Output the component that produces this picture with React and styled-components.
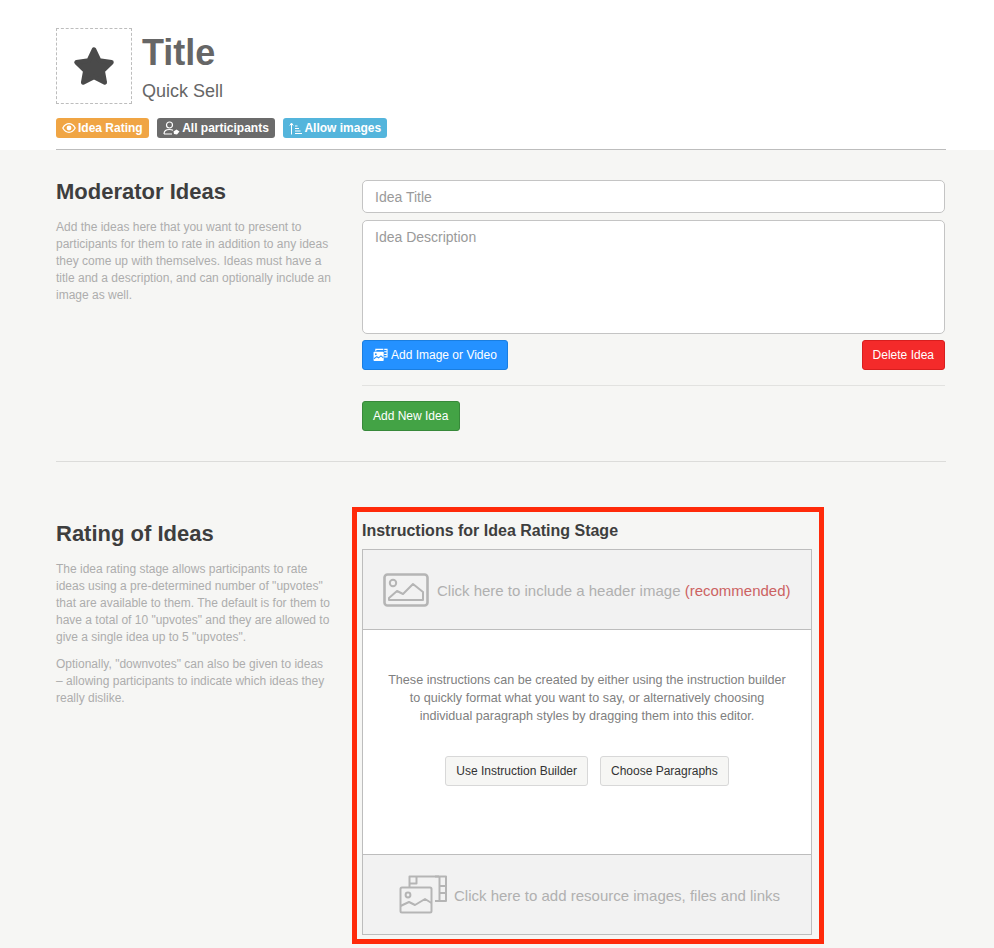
import React from "react"
import styled, { createGlobalStyle } from "styled-components"

const GlobalStyle = createGlobalStyle`
  html, body {
    margin: 0;
    padding: 0;
    background: #f6f6f4;
    font-family: "Liberation Sans", Arial, sans-serif;
  }
  * {
    box-sizing: border-box;
  }
`

const StarIcon = () => (
  <svg width="42" height="40" viewBox="0 0 42 40">
    <path
      d="M21 3.5 L26.3 14.6 L38.5 16.3 L29.7 25 L31.8 36.5 L21 31 L10.2 36.5 L12.3 25 L3.5 16.3 L15.7 14.6 Z"
      fill="#4a4a4a"
      stroke="#4a4a4a"
      strokeWidth="4.5"
      strokeLinejoin="round"
    />
  </svg>
)

const EyeIcon = () => (
  <svg width="14" height="12" viewBox="0 0 14 12" fill="none" stroke="#fff" strokeWidth="1.3">
    <path d="M0.8 6 C2.5 3 4.5 1.7 7 1.7 C9.5 1.7 11.5 3 13.2 6 C11.5 9 9.5 10.3 7 10.3 C4.5 10.3 2.5 9 0.8 6 Z" />
    <circle cx="7" cy="6" r="2.4" fill="#fff" stroke="none" />
  </svg>
)

const ParticipantIcon = () => (
  <svg width="17" height="14" viewBox="0 0 17 14" fill="none" stroke="#fff" strokeWidth="1.2">
    <circle cx="6.5" cy="4" r="3" />
    <path d="M1 13 C1 9.5 3 8.5 6.5 8.5 C8 8.5 9 8.7 10 9.2 M1 13 H9" />
    <path d="M10.5 10.5 L13.5 8.5 L16.5 10.5 L14 13.5 L11 13 Z" fill="#fff" stroke="none" />
  </svg>
)

const SortIcon = () => (
  <svg width="13" height="13" viewBox="0 0 13 13" fill="none" stroke="#fff" strokeWidth="1">
    <path d="M2.5 12.5 V1.5 M0.8 3.5 L2.5 1 L4.2 3.5" />
    <path d="M6 4 H8.5 M6 6.5 H10 M6 9 H11.5 M6 11.5 H13" />
  </svg>
)

const MediaIcon = () => (
  <svg width="15" height="14" viewBox="0 0 16 14" fill="none" stroke="#fff" strokeWidth="1.1">
    <path d="M3 3 V1 H11" />
    <path d="M12 1 H15 V9 H12 M12 3.5 H15 M12 6.5 H15" />
    <rect x="0.6" y="3.6" width="10.8" height="9.8" fill="#fff" stroke="none" rx="0.8" />
    <circle cx="3" cy="6.2" r="1" fill="#2491ff" stroke="none" />
    <path d="M1 11 L4 8.8 L6 10 L8.5 8 L11 10" stroke="#2491ff" />
  </svg>
)

const ImageIcon = () => (
  <svg width="46" height="34" viewBox="0 0 46 34" fill="none" stroke="#b5b5b5">
    <rect x="1.5" y="1.5" width="43" height="31" rx="3" strokeWidth="2.6" />
    <circle cx="10" cy="10" r="3.2" strokeWidth="2" />
    <path d="M6 25 L14 18 L20 21 L30 11 L40 19 V27 H6 Z" strokeWidth="2" strokeLinejoin="round" />
  </svg>
)

const ResourceIcon = () => (
  <svg width="49" height="39" viewBox="0 0 49 39" fill="none" stroke="#b5b5b5" strokeWidth="2" strokeLinejoin="round">
    <path d="M10.5 12 V1.5 H17.5 V8.5 H10.5 M17.5 1.5 H40" />
    <path d="M36 1.5 H47 V26 H36 M40.5 1.5 V26 M40.5 11 H47 M40.5 18 H47" />
    <rect x="1.5" y="12.5" width="31" height="25" rx="1.5" />
    <circle cx="9" cy="20" r="2.4" />
    <path d="M1.5 31 L10 27 L16 30 L26 24 L32.5 28" />
  </svg>
)

export default function App() {
  return (
    <Page>
      <GlobalStyle />
      <Header>
        <TitleRow>
          <IconBox>
            <StarIcon />
          </IconBox>
          <TitleText>
            <Title>Title</Title>
            <Subtitle>Quick Sell</Subtitle>
          </TitleText>
        </TitleRow>
        <Badges>
          <Badge $bg="#f0a544">
            <EyeIcon />
            Idea Rating
          </Badge>
          <Badge $bg="#6b6b6b">
            <ParticipantIcon />
            All participants
          </Badge>
          <Badge $bg="#54b5dc">
            <SortIcon />
            Allow images
          </Badge>
        </Badges>
        <HeaderRule />
      </Header>

      <Section>
        <Side>
          <Heading>Moderator Ideas</Heading>
          <Copy>
            Add the ideas here that you want to present to participants for them to rate in
            addition to any ideas they come up with themselves. Ideas must have a title and a
            description, and can optionally include an image as well.
          </Copy>
        </Side>
        <Form>
          <TitleInput placeholder="Idea Title" />
          <DescriptionInput placeholder="Idea Description" />
          <ButtonRow>
            <Button $bg="#2491ff" $border="#1a7ee0">
              <MediaIcon />
              Add Image or Video
            </Button>
            <Button $bg="#f42a2a" $border="#d81e1e">
              Delete Idea
            </Button>
          </ButtonRow>
          <FormRule />
          <AddRow>
            <AddButton $bg="#43a345" $border="#37893a">
              Add New Idea
            </AddButton>
          </AddRow>
        </Form>
      </Section>

      <SectionRule />

      <RatingSection>
        <RatingSide>
          <Heading>Rating of Ideas</Heading>
          <Copy>
            The idea rating stage allows participants to rate ideas using a pre-determined number
            of "upvotes" that are available to them. The default is for them to have a total of 10
            "upvotes" and they are allowed to give a single idea up to 5 "upvotes".
          </Copy>
          <Copy>
            Optionally, "downvotes" can also be given to ideas – allowing participants to indicate
            which ideas they really dislike.
          </Copy>
        </RatingSide>
        <Frame>
          <FrameTitle>Instructions for Idea Rating Stage</FrameTitle>
          <Editor>
            <HeaderDrop>
              <ImageIcon />
              <DropLabel>
                Click here to include a header image <Recommended>(recommended)</Recommended>
              </DropLabel>
            </HeaderDrop>
            <EditorBody>
              <BodyText>
                These instructions can be created by either using the instruction builder to
                quickly format what you want to say, or alternatively choosing individual paragraph
                styles by dragging them into this editor.
              </BodyText>
              <BodyButtons>
                <GhostButton>Use Instruction Builder</GhostButton>
                <GhostButton>Choose Paragraphs</GhostButton>
              </BodyButtons>
            </EditorBody>
            <ResourceDrop>
              <ResourceIcon />
              <DropLabel>Click here to add resource images, files and links</DropLabel>
            </ResourceDrop>
          </Editor>
        </Frame>
      </RatingSection>
    </Page>
  )
}

const Page = styled.div`
  width: 994px;
  height: 948px;
  overflow: hidden;
  background: #f6f6f4;
`

const Header = styled.header`
  background: #fff;
  height: 150px;
  padding: 28px 48px 0 56px;
`

const TitleRow = styled.div`
  display: flex;
  gap: 10px;
`

const IconBox = styled.div`
  width: 76px;
  height: 76px;
  border: 1px dashed #bdbdbd;
  display: flex;
  align-items: center;
  justify-content: center;
`

const TitleText = styled.div`
  display: flex;
  flex-direction: column;
`

const Title = styled.h1`
  margin: 5px 0 0;
  font-size: 36px;
  line-height: 40px;
  font-weight: 700;
  color: #666;
`

const Subtitle = styled.div`
  margin-top: 8px;
  font-size: 18px;
  line-height: 20px;
  color: #666;
`

const Badges = styled.div`
  display: flex;
  gap: 8.5px;
  margin-top: 14px;
`

const Badge = styled.span`
  display: inline-flex;
  align-items: center;
  gap: 2px;
  height: 20px;
  padding: 0 6px;
  border-radius: 3px;
  background: ${(p) => p.$bg};
  color: #fff;
  font-size: 12px;
  font-weight: 700;
`

const HeaderRule = styled.div`
  height: 1px;
  margin-top: 11px;
  background: #bdbdbd;
`

const Section = styled.section`
  display: grid;
  grid-template-columns: 276px 583px;
  column-gap: 30px;
  padding: 30px 0 0 56px;
`

const Side = styled.div`
  padding-top: 0;
`

const Heading = styled.h2`
  margin: 0 0 15px;
  font-size: 22px;
  line-height: 24px;
  font-weight: 700;
  color: #3e3e3e;
`

const Copy = styled.p`
  margin: 0 0 10px;
  font-size: 12px;
  line-height: 17px;
  color: #adadad;
`

const Form = styled.div`
  display: flex;
  flex-direction: column;
`

const TitleInput = styled.input`
  height: 33px;
  padding: 0 12px;
  border: 1px solid #c4c4c4;
  border-radius: 5px;
  background: #fff;
  font: 14px "Liberation Sans", Arial, sans-serif;
  outline: none;
  &::placeholder {
    color: #9a9a9a;
    opacity: 1;
  }
`

const DescriptionInput = styled.textarea`
  height: 114px;
  margin-top: 7px;
  padding: 8px 12px;
  border: 1px solid #c4c4c4;
  border-radius: 5px;
  background: #fff;
  font: 14px/16px "Liberation Sans", Arial, sans-serif;
  outline: none;
  resize: none;
  display: block;
  &::placeholder {
    color: #9a9a9a;
    opacity: 1;
  }
`

const ButtonRow = styled.div`
  display: flex;
  justify-content: space-between;
  margin-top: 6px;
`

const AddRow = styled.div`
  display: flex;
  margin-top: 15px;
`

const Button = styled.button`
  display: inline-flex;
  align-items: center;
  gap: 3px;
  height: 30px;
  padding: 0 10px;
  border: 1px solid ${(p) => p.$border};
  border-radius: 3px;
  background: ${(p) => p.$bg};
  color: #fff;
  font: 12px "Liberation Sans", Arial, sans-serif;
`

const AddButton = styled(Button)`
  width: 98px;
`

const FormRule = styled.div`
  height: 1px;
  margin-top: 15px;
  background: #e2e2e0;
`

const SectionRule = styled.div`
  height: 1px;
  margin: 30px 48px 0 56px;
  background: #dcdcda;
`

const RatingSection = styled.section`
  display: grid;
  grid-template-columns: 276px 472px;
  column-gap: 20px;
  padding: 45px 0 0 56px;
`

const RatingSide = styled.div`
  padding-top: 15px;
`

const Frame = styled.div`
  height: 437px;
  padding: 9px 6px 4px 5px;
  border: 5px solid #ff2a0a;
`

const FrameTitle = styled.h3`
  margin: 0 0 8px;
  font-size: 16px;
  line-height: 20px;
  font-weight: 700;
  color: #3e3e3e;
`

const Editor = styled.div`
  width: 450px;
  height: 386px;
  display: flex;
  flex-direction: column;
  border: 1px solid #bdbdbd;
  background: #fff;
`

const HeaderDrop = styled.div`
  height: 80px;
  display: flex;
  align-items: center;
  gap: 8px;
  padding-left: 20px;
  background: #f2f2f2;
  border-bottom: 1px solid #bdbdbd;
  color: #b0b0b0;
  font-size: 15px;
`

const DropLabel = styled.span`
  padding-top: 2px;
`

const Recommended = styled.span`
  color: #cc6262;
`

const EditorBody = styled.div`
  flex: 1;
  padding: 41px 20px 0;
`

const BodyText = styled.p`
  margin: 0;
  font-size: 12.6px;
  line-height: 18px;
  text-align: center;
  color: #808080;
`

const BodyButtons = styled.div`
  display: flex;
  justify-content: center;
  gap: 12px;
  margin-top: 31px;
`

const GhostButton = styled.button`
  height: 30px;
  padding: 0 10px;
  border: 1px solid #d8d8d8;
  border-radius: 3px;
  background: #f6f6f4;
  color: #333;
  font: 12px "Liberation Sans", Arial, sans-serif;
`

const ResourceDrop = styled.div`
  height: 80px;
  display: flex;
  align-items: center;
  gap: 6px;
  padding-left: 36px;
  background: #f2f2f2;
  border-top: 1px solid #bdbdbd;
  color: #b0b0b0;
  font-size: 15px;
`
